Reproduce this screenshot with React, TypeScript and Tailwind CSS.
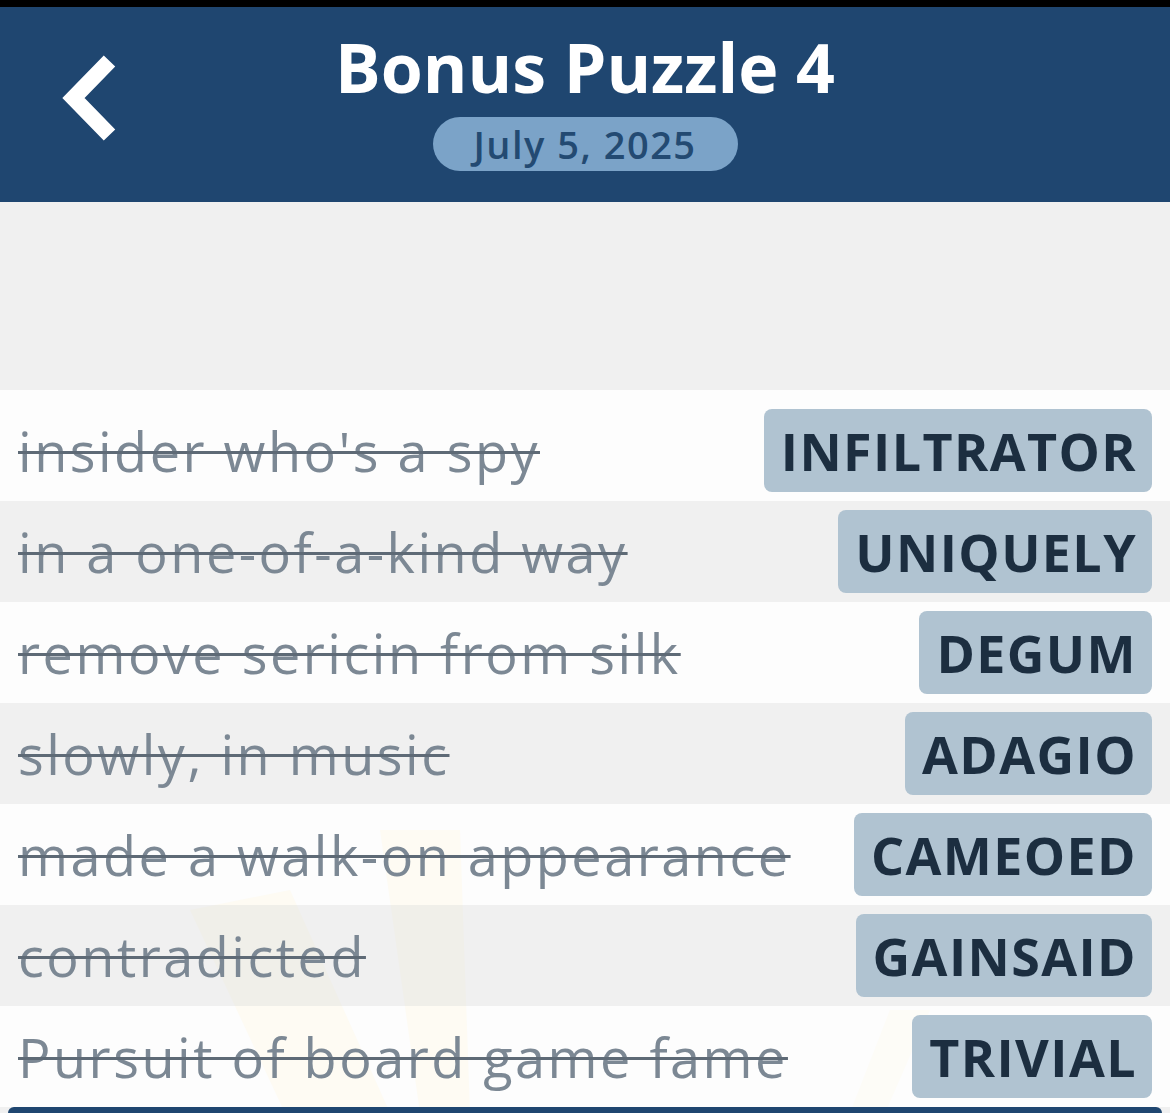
import React from "react";

const clues = [
  { clue: "insider who's a spy", answer: "INFILTRATOR" },
  { clue: "in a one-of-a-kind way", answer: "UNIQUELY" },
  { clue: "remove sericin from silk", answer: "DEGUM" },
  { clue: "slowly, in music", answer: "ADAGIO" },
  { clue: "made a walk-on appearance", answer: "CAMEOED" },
  { clue: "contradicted", answer: "GAINSAID" },
  { clue: "Pursuit of board game fame", answer: "TRIVIAL" },
];

// faint sunburst behind the last rows
function Rays() {
  return (
    <svg className="absolute left-0 top-0 pointer-events-none" width="1170" height="723" viewBox="0 0 1170 723">
      <polygon points="190,520 290,500 390,723 285,723" fill="#fcd34d" opacity="0.4" />
      <polygon points="380,440 460,440 470,723 420,723" fill="#fcd34d" opacity="0.4" />
      <polygon points="890,620 930,620 885,723 850,723" fill="#fcd34d" opacity="0.25" />
    </svg>
  );
}

function Row({ clue, answer, index }: { clue: string; answer: string; index: number }) {
  const bg = index % 2 === 0 ? "bg-white/85" : "bg-[#f0f0f0]/90";
  const pad = index === 0 ? "pt-[19px] pb-[9px]" : "pt-[9px] pb-[9px]";
  return (
    <div className={`flex items-center justify-between pl-[18px] pr-[18px] ${bg} ${pad}`}>
      <p className="text-[54px] tracking-[2.5px] text-[#7c8894] line-through decoration-[#5e6a76] decoration-[3px] leading-none whitespace-nowrap">
        {clue}
      </p>
      <div className="h-[83px] flex items-center pl-[17px] pr-[15px] rounded-[8px] bg-[#b0c3d1]">
        <span className="text-[52px] tracking-[1.4px] font-bold text-[#1c2e40] leading-none">{answer}</span>
      </div>
    </div>
  );
}

export default function App() {
  return (
    <div
      className="w-[1170px] h-[1113px] overflow-hidden bg-[#f0f0f0] flex flex-col"
      style={{ fontFamily: "'Open Sans', 'Noto Sans', sans-serif" }}
    >
      <div className="h-[7px] bg-black" />
      <div className="h-[196px] bg-[#1f4670] relative flex flex-col items-center">
        <svg className="absolute left-0 top-0" width="140" height="160" viewBox="0 0 140 160">
          <polyline points="109.5,54 73.5,91 109.5,128" fill="none" stroke="#fff" strokeWidth="16" strokeLinejoin="miter" />
        </svg>
        <h1 className="mt-[21px] text-[68px] font-bold text-white leading-[78px]">Bonus Puzzle 4</h1>
        <div className="mt-[11px] h-[54px] w-[305px] rounded-full bg-[#7ba3c8] flex items-center justify-center">
          <span className="text-[38px] tracking-[1.5px] font-semibold text-[#234a72] leading-none">July 5, 2025</span>
        </div>
      </div>
      <div className="h-[188px]" />
      <div className="relative flex-1 flex flex-col">
        <Rays />
        <div className="relative flex flex-col">
          {clues.map((c, i) => (
            <Row key={c.answer} clue={c.clue} answer={c.answer} index={i} />
          ))}
        </div>
        <div className="relative mx-[8px] mt-auto h-[6px] rounded-t-[14px] bg-[#1f4670]" />
      </div>
    </div>
  );
}
